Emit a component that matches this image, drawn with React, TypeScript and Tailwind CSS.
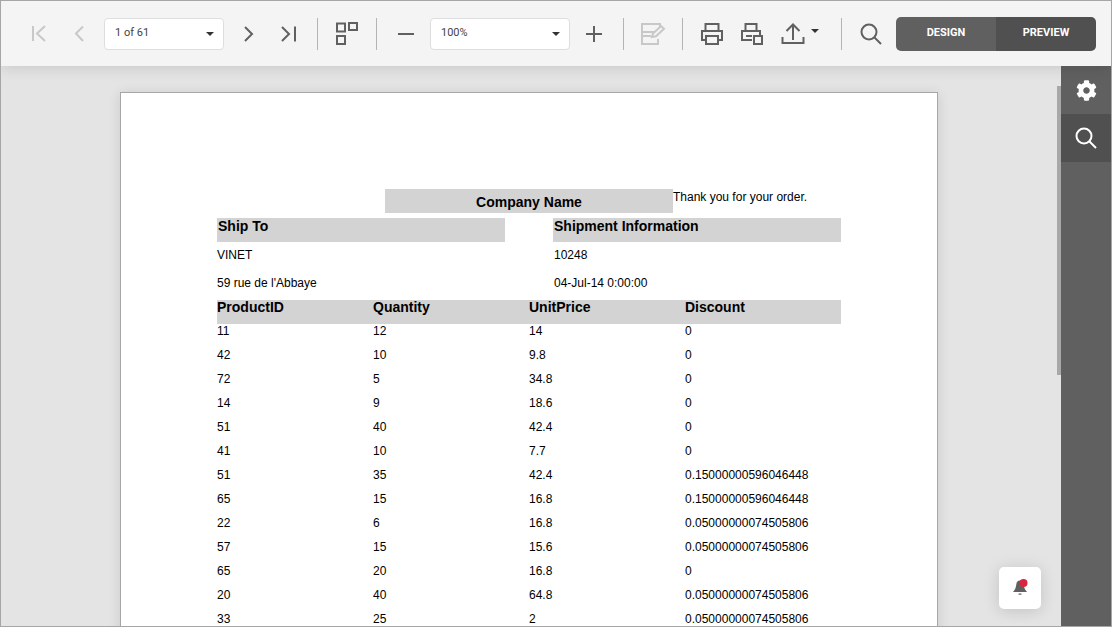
import { FaCog } from 'react-icons/fa';

const ROWS = [
  ['11', '12', '14', '0'],
  ['42', '10', '9.8', '0'],
  ['72', '5', '34.8', '0'],
  ['14', '9', '18.6', '0'],
  ['51', '40', '42.4', '0'],
  ['41', '10', '7.7', '0'],
  ['51', '35', '42.4', '0.15000000596046448'],
  ['65', '15', '16.8', '0.15000000596046448'],
  ['22', '6', '16.8', '0.05000000074505806'],
  ['57', '15', '15.6', '0.05000000074505806'],
  ['65', '20', '16.8', '0'],
  ['20', '40', '64.8', '0.05000000074505806'],
  ['33', '25', '2', '0.05000000074505806'],
];

function Icon({ children, disabled, w = 24 }: { children: React.ReactNode; disabled?: boolean; w?: number }) {
  return (
    <svg width={w} height="24" viewBox={`0 0 ${w} 24`} fill="none" strokeWidth="2" className={disabled ? 'stroke-[#c8c8c8]' : 'stroke-[#606060]'}>
      {children}
    </svg>
  );
}

function Slot({ children, width = 'w-10' }: { children: React.ReactNode; width?: string }) {
  return <div className={`${width} h-8 flex items-center justify-center shrink-0`}>{children}</div>;
}

function Sep() {
  return <div className="w-px h-8 bg-[#b4b4b4] mx-[9px] shrink-0" />;
}

function Caret() {
  return <div className="w-0 h-0 border-x-[4px] border-x-transparent border-t-[4px] border-t-[#333]" />;
}

function SelectBox({ label, width }: { label: string; width: string }) {
  return (
    <div className={`${width} h-8 shrink-0 flex items-center justify-between pl-[10px] pr-[9px] bg-white border border-[#dedede] rounded-[4px] font-['Roboto',sans-serif] text-[11px] text-[#444]`}>
      <span>{label}</span>
      <Caret />
    </div>
  );
}

function SearchIcon({ light }: { light?: boolean }) {
  return (
    <svg width="22" height="22" viewBox="0 0 22 22" fill="none" strokeWidth="2" stroke={light ? '#fff' : '#606060'}>
      <circle cx="9" cy="9" r="7.5" />
      <path d="M14.5 14.5 21 21" />
    </svg>
  );
}

function Toolbar() {
  return (
    <div className="h-[65px] shrink-0 bg-[#f4f4f4] flex items-center pl-[19px] relative z-10 shadow-[0_2px_14px_rgba(0,0,0,0.12)]">
      <Slot>
        <Icon disabled><path d="M5 4v15M17 4l-8 7.5 8 7.5" /></Icon>
      </Slot>
      <Slot>
        <Icon disabled><path d="M15 4.500l-7 7 7 7.500" /></Icon>
      </Slot>
      <div className="w-1 shrink-0" />
      <SelectBox label="1 of 61" width="w-[120px]" />
      <div className="w-1 shrink-0" />
      <Slot>
        <Icon><path d="M9 5l7 7-7 7" /></Icon>
      </Slot>
      <Slot>
        <Icon><path d="M6 5l7 7-7 7M19 4.500v15" /></Icon>
      </Slot>
      <Sep />
      <Slot>
        <Icon>
          <rect x="2" y="1.500" width="8" height="8" />
          <rect x="14" y="1" width="8" height="7" />
          <rect x="2" y="14" width="8" height="8" />
        </Icon>
      </Slot>
      <Sep />
      <Slot>
        <Icon><path d="M4 12h16" /></Icon>
      </Slot>
      <div className="w-1 shrink-0" />
      <SelectBox label="100%" width="w-[140px]" />
      <div className="w-1 shrink-0" />
      <Slot>
        <Icon><path d="M4 12h16M12 4v16" /></Icon>
      </Slot>
      <Sep />
      <Slot>
        <Icon disabled w={26}>
          <path d="M20 6V2H2v8h13M2 10v4h9M2 14v8h16v-5" />
          <path d="M12 15l1-3.500L21 4l3 2.800-8 7.500z" />
        </Icon>
      </Slot>
      <Sep />
      <Slot>
        <Icon>
          <path d="M5.500 9V2h13v7M6 18H2V9h20v9h-4" />
          <path d="M6 14h12v8H6z" />
        </Icon>
      </Slot>
      <Slot>
        <Icon>
          <path d="M5.500 9V2h11v7M12 18H2V9h18v4M6 14h6" />
          <path d="M14 14h8v8h-8z" />
        </Icon>
      </Slot>
      <div className="w-[60px] h-8 shrink-0 flex items-center pl-[9px] gap-[6px]">
        <Icon>
          <path d="M1.500 15v6h21v-6M12 18V3M5.500 9 12 2.500 18.500 9" />
        </Icon>
        <div className="-mt-1.5"><Caret /></div>
      </div>
      <Sep />
      <Slot>
        <SearchIcon />
      </Slot>
      <div className="w-[5px] shrink-0" />
      <div className="w-[200px] h-[34px] shrink-0 flex rounded-[5px] overflow-hidden font-['Roboto',sans-serif] text-[11px] font-bold text-white">
        <div className="w-[100px] bg-[#606060] flex items-center justify-center">DESIGN</div>
        <div className="w-[100px] bg-[#505050] flex items-center justify-center">PREVIEW</div>
      </div>
    </div>
  );
}

function ReportPage() {
  return (
    <div className="w-[818px] ml-[119px] bg-white border border-[#a6a6a6] pt-[96px] pl-[96px] shadow-[0_2px_12px_rgba(0,0,0,0.12)] font-['Liberation_Sans',Arial,sans-serif] text-[12px] leading-[14px] text-black">
      <div className="flex h-6 ml-[168px]">
        <div className="w-[288px] bg-[#d3d3d3] flex items-center justify-center pt-0.5 text-[14px] leading-4 font-bold">Company Name</div>
        <div className="pt-px">Thank you for your order.</div>
      </div>
      <div className="flex gap-12 mt-[5px] text-[14px] leading-4 font-bold">
        <div className="w-[288px] h-6 bg-[#d3d3d3] pl-px">Ship To</div>
        <div className="w-[288px] h-6 bg-[#d3d3d3] pl-px">Shipment Information</div>
      </div>
      <div className="flex gap-12 pt-[6px]">
        <div className="w-[288px]">VINET</div>
        <div className="w-[288px] pl-px">10248</div>
      </div>
      <div className="flex gap-12 pt-[14px]">
        <div className="w-[288px]">59 rue de l'Abbaye</div>
        <div className="w-[288px] pl-px">04-Jul-14 0:00:00</div>
      </div>
      <div className="grid grid-cols-[156px_156px_156px_156px] w-[624px] h-6 mt-[10px] bg-[#d3d3d3] text-[14px] leading-[15px] font-bold">
        <div>ProductID</div>
        <div>Quantity</div>
        <div>UnitPrice</div>
        <div>Discount</div>
      </div>
      {ROWS.map((row, i) => (
        <div key={i} className="grid grid-cols-[156px_156px_156px_156px] w-[624px] h-6">
          {row.map((cell, j) => <div key={j}>{cell}</div>)}
        </div>
      ))}
    </div>
  );
}

export default function App() {
  return (
    <div className="h-[627px] w-[1112px] overflow-hidden border border-[#a6a6a6] flex flex-col bg-[#e4e4e4]">
      <Toolbar />
      <div className="flex-1 min-h-0 flex">
        <div className="relative flex-1 min-w-0 overflow-hidden pt-[26px]">
          <ReportPage />
          <div className="absolute right-0 top-[20px] w-[4px] h-[289px] bg-[#a8a8a8]" />
          <div className="absolute left-[998px] top-[501px] w-[42px] h-[42px] bg-white rounded-[5px] flex items-center justify-center shadow-[0_2px_16px_rgba(0,0,0,0.15)]">
            <svg width="20" height="20" viewBox="0 0 20 20" fill="#606060">
              <path d="M10 2.500c-2.500 0-3.500 2-3.800 4.500-.3 3-1.500 5-3.200 7h14c-1.700-2-3-4-3.200-7C13.500 4.500 12.500 2.500 10 2.500z" />
              <rect x="8.500" y="15.500" width="3" height="1.200" />
              <circle cx="13.500" cy="5" r="4" fill="#d9263f" />
            </svg>
          </div>
        </div>
        <div className="w-[50px] shrink-0 bg-[#606060] flex flex-col">
          <div className="h-12 flex items-center justify-center text-white">
            <FaCog size={21} />
          </div>
          <div className="h-12 bg-[#505050] flex items-center justify-center">
            <SearchIcon light />
          </div>
        </div>
      </div>
    </div>
  );
}
